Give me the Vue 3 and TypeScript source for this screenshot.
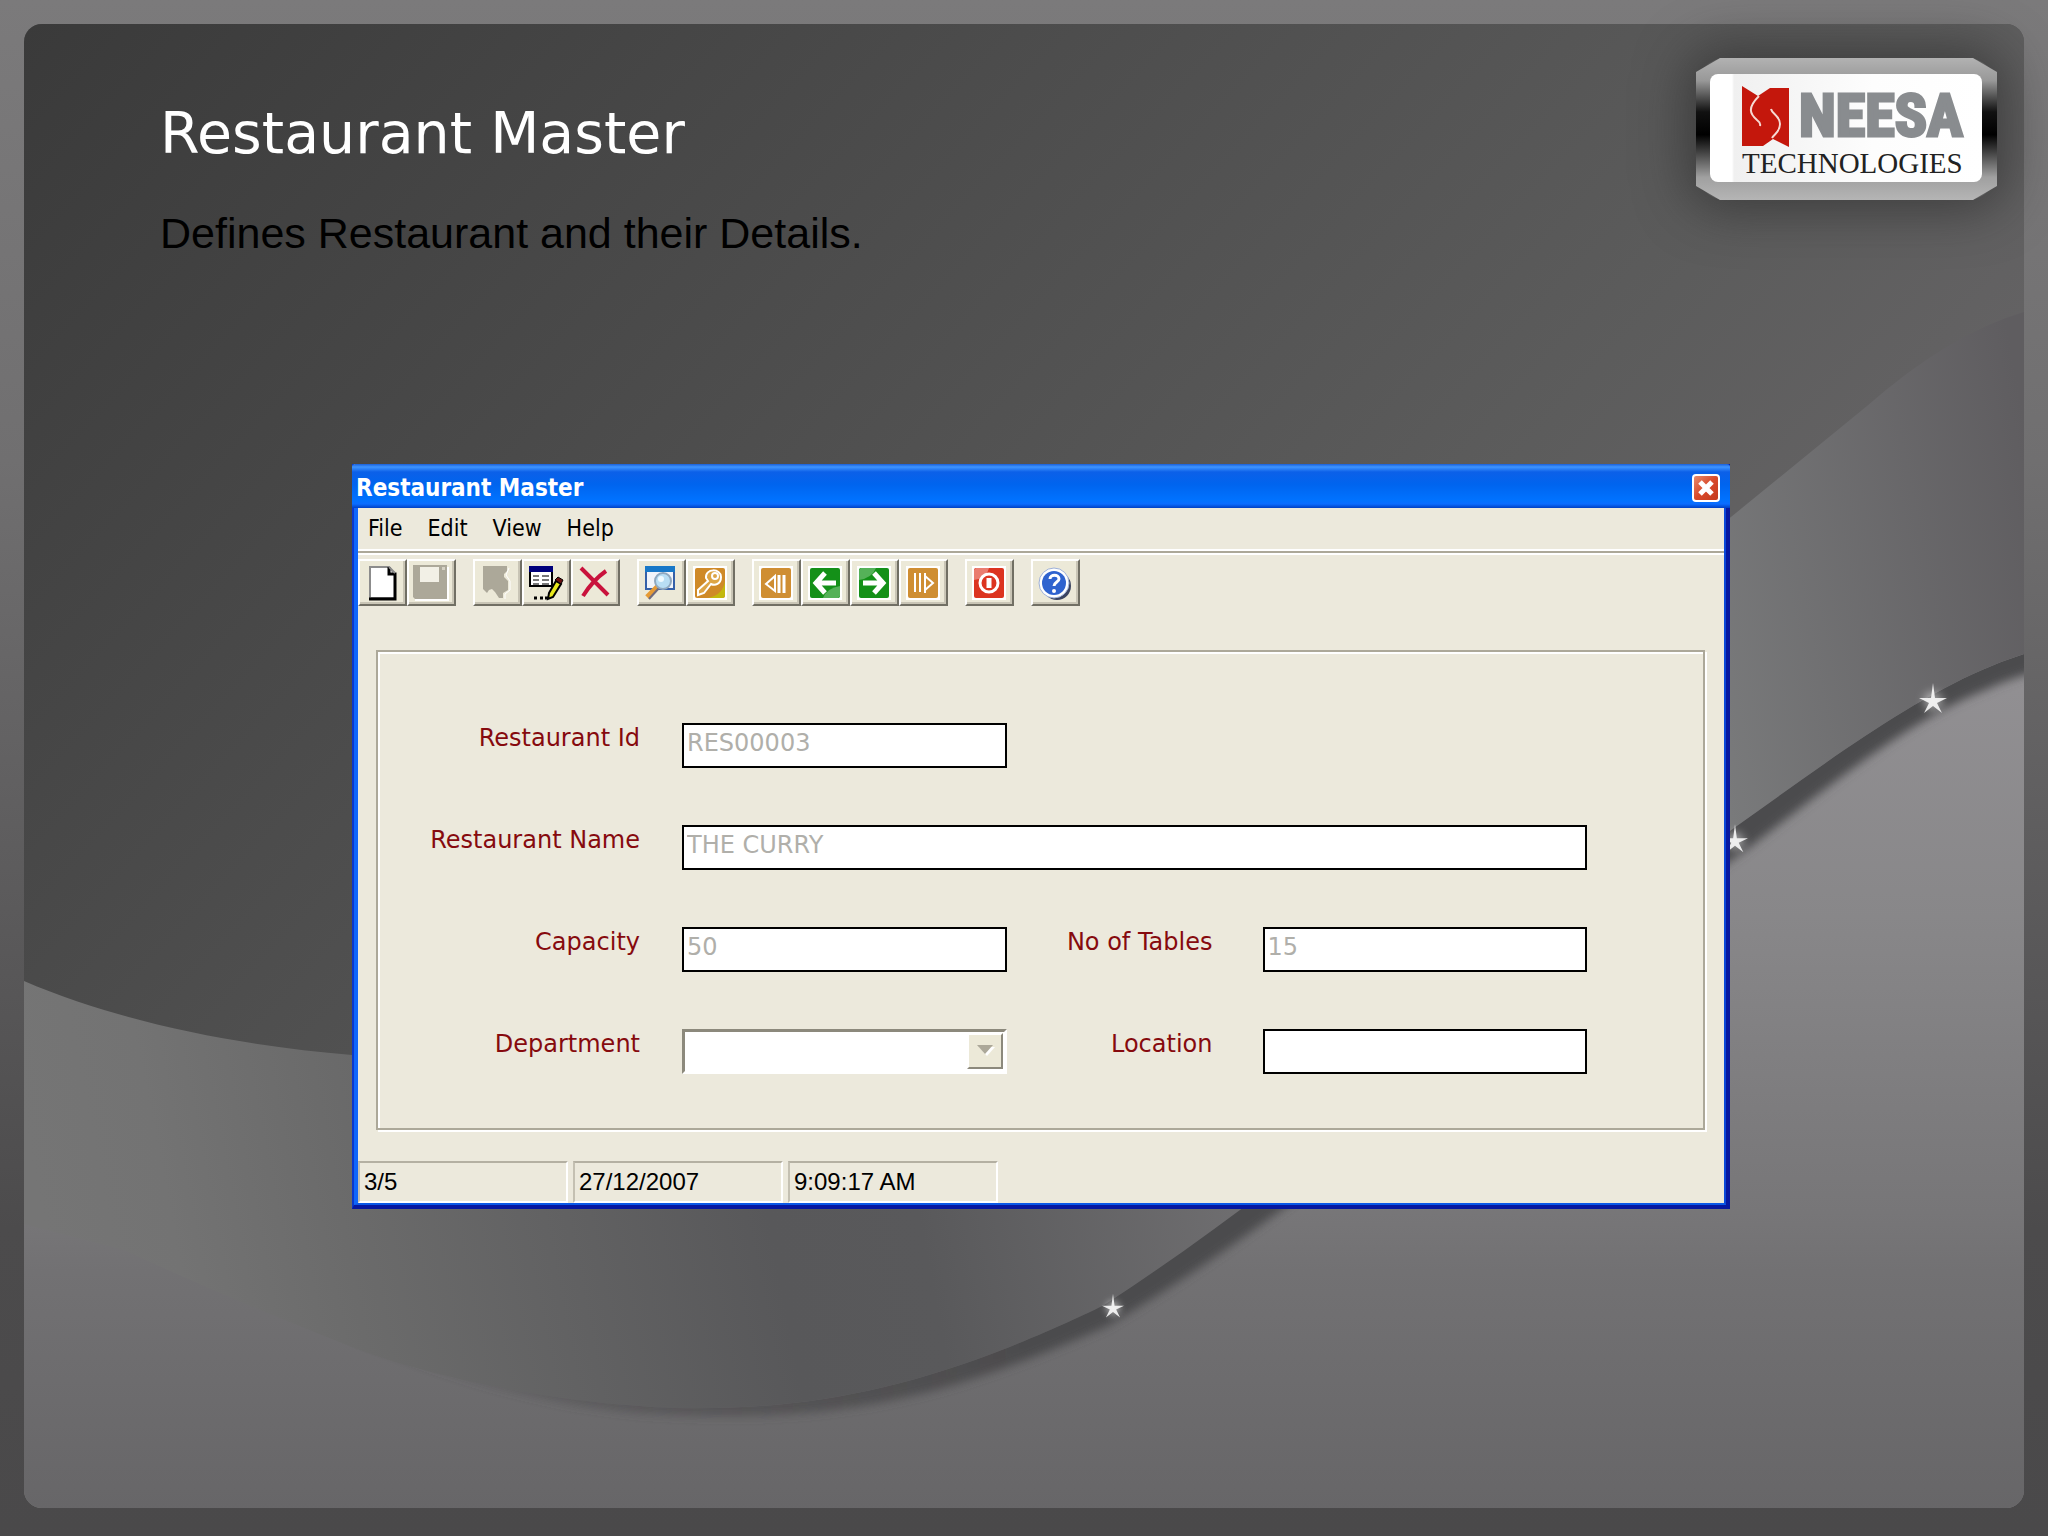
<script setup lang="ts">
import { ref } from 'vue'

const menus: string[] = ['File', 'Edit', 'View', 'Help']
const restaurantId = ref('RES00003')
const restaurantName = ref('THE CURRY')
const capacity = ref('50')
const tables = ref('15')
const location = ref('')
const status: string[] = ['3/5', '27/12/2007', '9:09:17 AM']
const stars = [
  { x: 1909, y: 677, s: 14 },
  { x: 1711, y: 817, s: 13 },
  { x: 1089, y: 1284, s: 11 },
]
</script>

<template>
  <main class="page">
    <section class="slide">
      <svg class="backdrop" viewBox="0 0 2000 1484" preserveAspectRatio="none" aria-hidden="true">
        <defs>
          <linearGradient id="base" gradientUnits="userSpaceOnUse" x1="0" y1="0" x2="1360" y2="1260">
            <stop offset="0" stop-color="#3a3a3a" />
            <stop offset="0.75" stop-color="#5c5c5c" />
            <stop offset="1" stop-color="#686668" />
          </linearGradient>
          <linearGradient id="band" gradientUnits="userSpaceOnUse" x1="0" y1="1100" x2="2060" y2="700">
            <stop offset="0" stop-color="#757575" />
            <stop offset="0.06" stop-color="#737373" />
            <stop offset="0.14" stop-color="#6b6b6b" />
            <stop offset="0.34" stop-color="#58585a" />
            <stop offset="0.41" stop-color="#59595b" />
            <stop offset="0.6" stop-color="#747375" />
            <stop offset="0.82" stop-color="#7a7b7c" />
            <stop offset="1" stop-color="#5f5d60" />
          </linearGradient>
          <linearGradient id="floor" gradientUnits="userSpaceOnUse" x1="0" y1="640" x2="0" y2="1484">
            <stop offset="0" stop-color="#929093" />
            <stop offset="0.3" stop-color="#888789" />
            <stop offset="0.65" stop-color="#777678" />
            <stop offset="0.72" stop-color="#727173" />
            <stop offset="1" stop-color="#676668" />
          </linearGradient>
          <linearGradient id="shade" gradientUnits="userSpaceOnUse" x1="250" y1="0" x2="1000" y2="0">
            <stop offset="0" stop-color="#4c4b4d" stop-opacity="0" />
            <stop offset="0.5" stop-color="#4c4b4d" stop-opacity="0.6" />
            <stop offset="1" stop-color="#4c4b4d" />
          </linearGradient>
          <filter id="soft" x="-5%" y="-5%" width="110%" height="110%">
            <feGaussianBlur stdDeviation="5" />
          </filter>
          <filter id="glow" x="-100%" y="-100%" width="300%" height="300%">
            <feGaussianBlur stdDeviation="5" />
          </filter>
          <clipPath id="floorClip">
            <path d="M0 1200L100 1226Q210 1277 333 1325C430 1361 560 1381 650 1384C770 1387 870 1368 983 1324C1030 1305 1060 1291 1080 1281C1300 1138 1500 950 1710 804C1800 740 1880 680 1958 646Q1978 637 2000 630V1484H0Z" />
          </clipPath>
        </defs>
        <rect width="2000" height="1484" fill="url(#base)" />
        <path d="M0 957C100 1000 220 1022 328 1031C800 1080 1200 920 1420 740C1560 620 1640 540 1707 493L1843 382Q1925 310 2000 288V1484H0Z" fill="url(#band)" />
        <g clip-path="url(#floorClip)">
          <rect y="600" width="2000" height="884" fill="url(#floor)" />
          <path d="M200 1250C430 1341 560 1361 650 1364C770 1367 870 1348 983 1304C1030 1285 1060 1271 1080 1261C1300 1118 1500 930 1710 784C1800 720 1880 660 1958 626Q1978 617 2030 600V642Q1978 657 1964 665C1890 693 1810 758 1726 823C1516 971 1316 1164 1082 1303C1060 1312 1030 1326 983 1343C870 1385 770 1396 650 1391C560 1388 430 1368 200 1260Z" fill="url(#shade)" filter="url(#soft)" />
        </g>
        <g v-for="star in stars" :key="star.x" :transform="`translate(${star.x} ${star.y}) scale(${star.s / 14})`">
          <circle r="9" fill="#fff" opacity="0.5" filter="url(#glow)" />
          <path d="M0-18L2-3L14-3L4 2L9 12L0 5L-9 12L-4 2L-14-3L-2-3Z" fill="#fff" opacity="0.85" />
        </g>
      </svg>

      <header class="header">
        <div class="headings">
          <h1>Restaurant Master</h1>
          <p>Defines Restaurant and their Details.</p>
        </div>
        <div class="logo">
          <div class="logo-frame">
            <div class="logo-plate">
              <div class="brand">
                <svg width="47" height="61" viewBox="0 0 47 61" aria-hidden="true">
                  <path d="M0 0L16 10L28 2H47V61L31 53L21 60H0Z" fill="#c4170c" />
                  <path d="M17 10C5 22 8 28 15 34Q19 37 18 40M29 23C30 28 38 30 38 38C38 46 33 47 30 52" fill="none" stroke="#f6d9d3" stroke-width="2" />
                </svg>
                <strong>NEESA</strong>
              </div>
              <span class="tech">TECHNOLOGIES</span>
            </div>
          </div>
        </div>
      </header>

      <div class="desk">
        <section class="window">
          <div class="titlebar">
            <h2>Restaurant Master</h2>
            <button class="close" type="button" aria-label="Close">
              <svg width="24" height="24" viewBox="0 0 24 24"><path d="M6 6L18 18M18 6L6 18" stroke="#fff" stroke-width="5" /></svg>
            </button>
          </div>
          <div class="client">
            <nav class="menubar">
              <button v-for="m in menus" :key="m" type="button">{{ m }}</button>
            </nav>

            <div class="toolbar">
              <div class="tools">
                <button type="button" aria-label="New">
                  <svg viewBox="2 2 45 43">
                    <path d="M12 8H31L37 15V39H12Z" fill="#fff" stroke="#8c8c8c" stroke-width="2" />
                    <path d="M31 8V15H37V40H11" fill="none" stroke="#000" stroke-width="3" />
                    <path d="M31 8L37 14" stroke="#8c8c8c" stroke-width="2" />
                  </svg>
                </button>
                <button type="button" aria-label="Save" disabled>
                  <svg viewBox="2 2 45 43">
                    <path d="M8 8H42V42H8Z" fill="#fff" />
                    <path d="M6 6H40V40H8L6 38Z" fill="#aca899" />
                    <path d="M13 8H32V23H13Z" fill="#f2f0e6" />
                    <path d="M35 8H38V11H35Z" fill="#d6d2c4" />
                  </svg>
                </button>
              </div>
              <div class="tools">
                <button type="button" aria-label="Undo" disabled>
                  <svg viewBox="2 2 45 43">
                    <path d="M10 7H34V12L31 15V18L35 22V31L30 34V39H26L22 33L19 30L16 31L14 34L10 30Z" fill="#aca899" />
                    <path d="M36 9L33 16L37 22V31L32 35V40" fill="none" stroke="#fff" stroke-width="1" />
                  </svg>
                </button>
                <button type="button" aria-label="Edit">
                  <svg viewBox="2 2 45 43">
                    <path d="M8 8H30V27H8Z" fill="#fff" stroke="#000" stroke-width="2" />
                    <path d="M7 7H31V13H7Z" fill="#00007b" />
                    <path d="M11 17H17M20 17H27M11 21H17M20 21H27M11 25H17M20 25H27" stroke="#777" stroke-width="2" />
                    <path d="M27 34L34 22L39 25L31 38L26 40Z" fill="#e8e81c" stroke="#000" stroke-width="2" />
                    <path d="M33 21L36 18L41 21L39 25Z" fill="#6b1010" stroke="#000" stroke-width="1" />
                    <path d="M12 39H15M18 39H21M23 39H26" stroke="#000" stroke-width="3" />
                  </svg>
                </button>
                <button type="button" aria-label="Delete">
                  <svg viewBox="2 2 45 43"><path d="M10 9Q24 23 37 36M35 12Q22 21 12 37" fill="none" stroke="#c9123c" stroke-width="4" /></svg>
                </button>
              </div>
              <div class="tools">
                <button type="button" aria-label="Find">
                  <svg viewBox="2 2 45 43">
                    <path d="M9 8H37V30H9Z" fill="#f1f4fa" stroke="#3560a8" stroke-width="2" />
                    <path d="M8 7H38V13H8Z" fill="#1878c8" />
                    <path d="M21 27L10 38" stroke="#e59a35" stroke-width="5" />
                    <path d="M22 29L12 40" stroke="#6f6a7c" stroke-width="2" />
                    <circle cx="26" cy="22" r="8" fill="#b8def4" stroke="#8fa8bf" stroke-width="2" />
                    <circle cx="24" cy="20" r="3" fill="#eefaff" />
                  </svg>
                </button>
                <button type="button" aria-label="Key">
                  <svg viewBox="2 2 45 43">
                    <rect x="7" y="7" width="34" height="34" fill="#fff" />
                    <rect x="9" y="9" width="30" height="30" rx="2" fill="#cf8a28" />
                    <path d="M22 39Q37 36 39 22V37L37 39Z" fill="#c3b80e" />
                    <path d="M20 19C19 9 35 9 35 18C35 25 29 27 25 25L18 34L12 36V31L22 22Z" fill="#dda546" stroke="#fff" stroke-width="2" />
                    <circle cx="29" cy="17" r="3" fill="none" stroke="#fff" stroke-width="2" />
                  </svg>
                </button>
              </div>
              <div class="tools">
                <button type="button" aria-label="First">
                  <svg viewBox="2 2 45 43">
                    <rect x="7" y="7" width="34" height="34" fill="#fff" />
                    <rect x="9" y="9" width="30" height="30" rx="2" fill="#cf8e32" />
                    <path d="M23 17L14 25L23 32Z" fill="none" stroke="#fff" stroke-width="2" />
                    <path d="M27 16V34M32 16V34" stroke="#fff" stroke-width="3" />
                  </svg>
                </button>
                <button type="button" aria-label="Previous">
                  <svg viewBox="2 2 45 43">
                    <rect x="7" y="7" width="34" height="34" fill="#fff" />
                    <rect x="9" y="9" width="30" height="30" rx="2" fill="#149018" />
                    <path d="M22 39Q26 29 39 27V37L37 39Z" fill="#55b158" />
                    <path d="M35 24H17M24 14L15 24L24 34" fill="none" stroke="#fff" stroke-width="5" />
                  </svg>
                </button>
                <button type="button" aria-label="Next">
                  <svg viewBox="2 2 45 43">
                    <rect x="7" y="7" width="34" height="34" fill="#fff" />
                    <rect x="9" y="9" width="30" height="30" rx="2" fill="#149018" />
                    <path d="M9 11L11 9H26Q22 19 9 21Z" fill="#55b158" />
                    <path d="M13 24H31M24 14L33 24L24 34" fill="none" stroke="#fff" stroke-width="5" />
                  </svg>
                </button>
                <button type="button" aria-label="Last">
                  <svg viewBox="2 2 45 43">
                    <rect x="7" y="7" width="34" height="34" fill="#fff" />
                    <rect x="9" y="9" width="30" height="30" rx="2" fill="#cf8e32" />
                    <path d="M26 17L34 24L26 31Z" fill="none" stroke="#fff" stroke-width="2" />
                    <path d="M16 14V33M21 14V33" stroke="#fff" stroke-width="2" />
                    <path d="M26 14V34" stroke="#fff" stroke-width="2" />
                  </svg>
                </button>
              </div>
              <div class="tools">
                <button type="button" aria-label="Exit">
                  <svg viewBox="2 2 45 43">
                    <rect x="7" y="7" width="34" height="34" fill="#fff" />
                    <rect x="9" y="9" width="30" height="30" rx="2" fill="#dc3420" />
                    <path d="M9 11L11 9H24Q22 19 9 21Z" fill="#ea7d70" />
                    <circle cx="24" cy="24" r="9" fill="none" stroke="#fff" stroke-width="3" />
                    <path d="M24 19V29" stroke="#fff" stroke-width="5" />
                  </svg>
                </button>
              </div>
              <div class="tools">
                <button type="button" aria-label="Help">
                  <svg viewBox="2 2 45 43">
                    <circle cx="26" cy="27" r="14" fill="#3b4460" />
                    <circle cx="23" cy="24" r="15" fill="#fff" stroke="#9db0d8" stroke-width="1" />
                    <circle cx="23" cy="24" r="12" fill="#2f63cf" />
                    <path d="M19 20C19 15 28 15 28 20C28 23 23 23 23 27" fill="none" stroke="#fff" stroke-width="3" />
                    <circle cx="23" cy="32" r="2" fill="#fff" />
                  </svg>
                </button>
              </div>
            </div>

            <form class="group" @submit.prevent>
              <label for="rid">Restaurant Id</label>
              <input id="rid" v-model="restaurantId" type="text" disabled />
              <label class="row-start" for="rname">Restaurant Name</label>
              <input id="rname" v-model="restaurantName" class="wide" type="text" disabled />
              <label for="cap">Capacity</label>
              <input id="cap" v-model="capacity" type="text" disabled />
              <label class="second" for="tbl">No of Tables</label>
              <input id="tbl" v-model="tables" type="text" disabled />
              <label for="dept">Department</label>
              <div class="combo">
                <select id="dept" disabled><option value=""></option></select>
                <span class="drop" aria-hidden="true">
                  <svg width="20" height="14" viewBox="0 0 20 14">
                    <path d="M4 3H20L12 12Z" fill="#fff" />
                    <path d="M2 1H18L10 10Z" fill="#aca899" />
                  </svg>
                </span>
              </div>
              <label class="second" for="loc">Location</label>
              <input id="loc" v-model="location" type="text" disabled />
            </form>

            <footer class="statusbar">
              <span v-for="s in status" :key="s">{{ s }}</span>
            </footer>
          </div>
        </section>
      </div>
    </section>
  </main>
</template>

<style>
body {
  margin: 0;
}
</style>

<style scoped>
* {
  box-sizing: border-box;
}
.page {
  min-height: 100vh;
  padding: 24px 24px 28px;
  display: flex;
  background: linear-gradient(#7b7a7b 0%, #706f70 30%, #595859 62%, #4c4b4c 80%, #4a494a 100%);
}
.slide {
  position: relative;
  flex: 1;
  min-width: 0;
  border-radius: 18px;
  background: #555;
}
.backdrop {
  position: absolute;
  inset: 0;
  width: 100%;
  height: 100%;
  border-radius: 18px;
}
.header {
  position: relative;
  display: flex;
  justify-content: space-between;
  align-items: flex-start;
  padding: 34px 27px 0 136px;
}
.headings {
  padding-top: 43px;
}
h1 {
  margin: 0;
  font: 400 57px/64px Verdana, "DejaVu Sans", sans-serif;
  color: #fff;
}
.headings p {
  margin: 44px 0 0;
  font: 400 43px/48px "Liberation Sans", Arial, sans-serif;
  color: #000;
}
.logo {
  border-radius: 30px;
  box-shadow: 0 0 50px 10px rgba(40, 40, 40, 0.6);
}
.logo-frame {
  padding: 16px 15px 18px 14px;
  clip-path: polygon(24px 0, calc(100% - 24px) 0, 100% 14px, 100% 128px, calc(100% - 24px) 100%, 24px 100%, 0 128px, 0 14px);
  background: linear-gradient(#b2b2b2 0%, #989898 16%, #111 38%, #000 54%, #a0a0a0 84%, #b5b5b5 100%);
}
.logo-plate {
  width: 272px;
  height: 108px;
  padding: 10px 14px 0 32px;
  border-radius: 8px;
  background: linear-gradient(90deg, #fff 22px, #f0f0f0 24px, #fdfdfd 60%, #fff);
}
.brand {
  display: flex;
  align-items: center;
  gap: 10px;
  height: 64px;
}
.brand strong {
  font: 700 60px/60px Impact, "Liberation Sans Narrow", "Roboto Condensed", "Open Sans Condensed", "Liberation Sans", sans-serif;
  color: #898c8f;
  -webkit-text-stroke: 3px #898c8f;
}
.tech {
  display: block;
  font: 400 29px/30px "Liberation Serif", "Times New Roman", serif;
  color: #222;
}
.desk {
  position: relative;
  padding: 207px 294px 0 328px;
}
.window {
  border: solid;
  border-width: 0 4px 4px 2px;
  border-color: #0a3fd8 #0618a0 #0618a0 #0a38cc;
  background: #ece9dc;
}
.titlebar {
  display: flex;
  align-items: center;
  justify-content: space-between;
  height: 44px;
  margin: 0 -4px 0 -2px;
  padding: 4px 10px 0 4px;
  border-radius: 3px 3px 0 0;
  background: linear-gradient(#1a60d8 0, #3f95ff 3px, #0c60e8 8px, #0064ee 20px, #0072ff 36px, #0a6cff 40px, #0040c4 44px);
}
h2 {
  margin: 0;
  font: 700 24px/32px "DejaVu Sans Condensed", "DejaVu Sans", Tahoma, sans-serif;
  color: #fff;
}
.close {
  width: 28px;
  height: 28px;
  padding: 0;
  border: 2px solid #fff;
  border-radius: 4px;
  background: linear-gradient(135deg, #e88a6c, #d8492a 50%, #c43a1c);
}
.close svg {
  display: block;
}
.client {
  border: solid;
  border-width: 0 2px 2px 4px;
  border-color: #0a58e8 #0a48d8 #0a58e8 #0f66fa;
}
.menubar {
  display: flex;
  gap: 25px;
  height: 45px;
  padding: 5px 10px 0;
  border-bottom: 2px solid #aca899;
  box-shadow: 0 2px 0 #fff, inset 0 -2px 0 #fff;
}
.menubar button {
  height: 30px;
  padding: 0;
  border: 0;
  background: none;
  font: 400 23px/30px "DejaVu Sans Condensed", "DejaVu Sans", Tahoma, sans-serif;
  color: #000;
}
.toolbar {
  display: flex;
  gap: 17px;
  padding-top: 6px;
}
.tools {
  display: flex;
}
.tools button {
  width: 49px;
  height: 47px;
  padding: 0;
  border: 2px solid;
  border-color: #fff #716f64 #716f64 #fff;
  box-shadow: inset -2px -2px 0 #c9c5b6;
  background: #ece9d8;
}
.tools svg {
  display: block;
  width: 45px;
  height: 43px;
}
.group {
  display: grid;
  grid-template-columns: 304px 1fr 256px 1fr;
  row-gap: 57px;
  margin: 44px 19px 0 18px;
  padding: 71px 116px 54px 0;
  border: 2px solid #aca899;
  box-shadow: 2px 2px 0 #fff, inset 2px 2px 0 #fff;
}
label {
  padding-right: 42px;
  text-align: right;
  font: 400 24px/30px Verdana, "DejaVu Sans", sans-serif;
  color: #860a0e;
}
.second {
  padding-right: 50px;
}
.row-start {
  grid-column: 1;
}
input {
  width: 100%;
  height: 45px;
  padding: 0 3px 6px;
  border: 2px solid #000;
  border-radius: 0;
  background: #fff;
  font: 400 24px/30px Verdana, "DejaVu Sans", sans-serif;
  color: #b0afaa;
}
.wide {
  grid-column: span 3;
}
.combo {
  position: relative;
  height: 45px;
}
select {
  appearance: none;
  display: block;
  width: 100%;
  height: 45px;
  border: 3px solid;
  border-color: #8c897c #fff #fff #8c897c;
  border-radius: 0;
  background: #fff;
  opacity: 1;
}
.drop {
  position: absolute;
  top: 4px;
  right: 4px;
  bottom: 5px;
  width: 36px;
  display: grid;
  place-items: center;
  border: 2px solid;
  border-color: #fff #8c897c #8c897c #fff;
  background: #ece9d8;
  pointer-events: none;
}
.statusbar {
  display: flex;
  gap: 5px;
  margin-top: 31px;
}
.statusbar span {
  width: 210px;
  height: 42px;
  padding: 3px 4px 0;
  border: 2px solid;
  border-color: #b4b0a2 #fff #fff #c4c0b2;
  font: 400 24px/32px "Liberation Sans", Arial, sans-serif;
  color: #000;
}
</style>
